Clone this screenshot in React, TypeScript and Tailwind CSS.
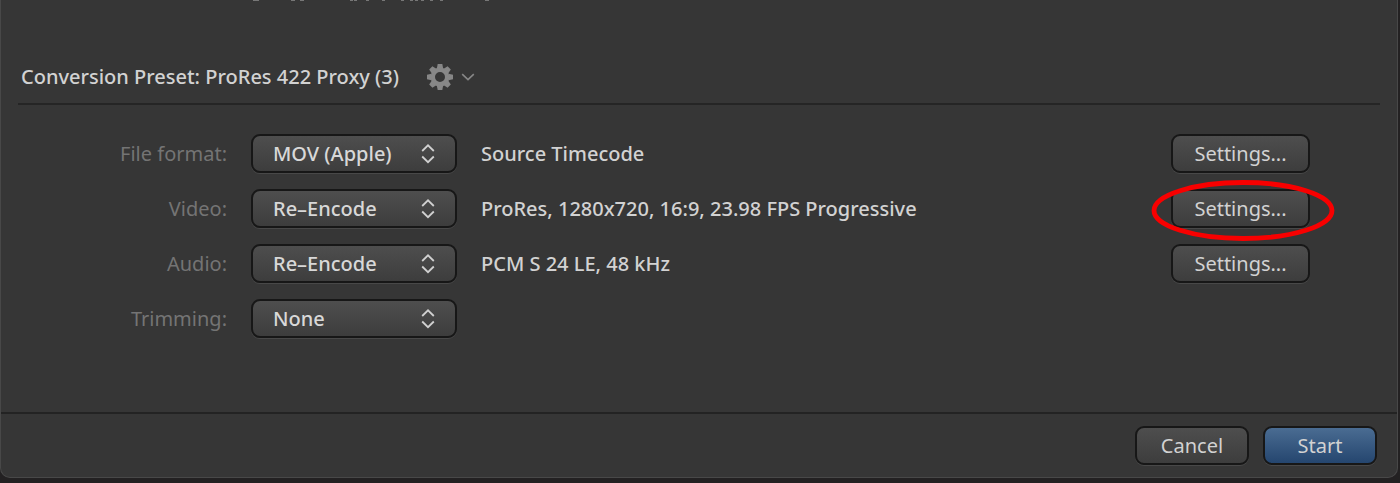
import * as React from "react";
import { clsx } from "clsx";

const rows = [
  {
    id: "file-format",
    label: "File format:",
    options: ["MOV (Apple)", "MP4", "MXF"],
    summary: "Source Timecode",
    settings: true,
  },
  {
    id: "video",
    label: "Video:",
    options: ["Re–Encode", "Copy", "None"],
    summary: "ProRes, 1280x720, 16:9, 23.98 FPS Progressive",
    settings: true,
    highlighted: true,
  },
  {
    id: "audio",
    label: "Audio:",
    options: ["Re–Encode", "Copy", "None"],
    summary: "PCM S 24 LE, 48 kHz",
    settings: true,
  },
  {
    id: "trimming",
    label: "Trimming:",
    options: ["None", "In/Out points"],
    summary: "",
    settings: false,
  },
];

// Bottom edge of the row that is scrolled out above the panel: [x, width]
const scrolledMarks = [
  [3, 6], [41, 4], [50, 4], [100, 3], [104, 3], [116, 3], [132, 3], [151, 3],
  [160, 3], [165, 3], [171, 3], [180, 3], [190, 3], [235, 4],
];

function Button({
  primary,
  className,
  children,
}: {
  primary?: boolean;
  className?: string;
  children: React.ReactNode;
}) {
  return (
    <button
      type="button"
      className={clsx(
        "h-[39px] rounded-[9px] border-2 border-[#171717] bg-linear-to-b text-xl leading-6 text-[#d2d2d2] shadow-[0_1px_0_0_#484848]",
        primary ? "from-[#4a6c92] to-[#25466f]" : "from-[#4e4e4e] to-[#3d3d3d]",
        className
      )}
    >
      {children}
    </button>
  );
}

function Select({ id, options }: { id: string; options: string[] }) {
  return (
    <div className="relative">
      <select
        id={id}
        className="block h-[39px] w-full appearance-none rounded-[9px] border-2 border-[#171717] bg-linear-to-b from-[#4e4e4e] to-[#3d3d3d] pl-5 pr-10 text-xl leading-6 font-medium text-[#d8d8d8] shadow-[0_1px_0_0_#484848]"
      >
        {options.map((option) => (
          <option key={option}>{option}</option>
        ))}
      </select>
      <svg
        viewBox="0 0 14 20"
        className="pointer-events-none absolute top-[10px] right-[22px] h-5 w-[14px]"
        fill="none"
        stroke="#d0d0d0"
        strokeWidth="1.8"
      >
        <path d="M1.2 7 7 1.3 12.8 7M1.2 12.5 7 18.2l5.8-5.7" />
      </svg>
    </div>
  );
}

function GearIcon() {
  return (
    <svg viewBox="-13 -13 26 26" className="size-[26px]">
      <circle r="7.2" fill="none" stroke="#878787" strokeWidth="4.4" />
      <g fill="#878787">
        {[0, 45, 90, 135, 180, 225, 270, 315].map((angle) => (
          <path key={angle} d="M-3.2-8.5-2.3-13H2.3L3.2-8.5Z" transform={`rotate(${angle})`} />
        ))}
      </g>
    </svg>
  );
}

export default function App() {
  return (
    <div className="flex min-h-screen flex-col bg-[#232122] pr-0.5 pb-[5px] font-['Noto_Sans',sans-serif] text-xl leading-6 text-[#d2d2d2]">
      <main className="flex flex-1 flex-col rounded-b-[10px] border border-t-0 border-[#484848] bg-[#363636]">
        <svg viewBox="0 0 260 1" className="ml-[249px] h-px w-[260px]">
          {scrolledMarks.map(([x, width]) => (
            <rect key={x} x={x} width={width} height="1" fill="#777777" />
          ))}
        </svg>

        <section className="flex-1 px-[17px]">
          <header className="mt-[49px] flex h-[55px] items-center border-b-2 border-[#252525] pl-[3px]">
            <h1 className="font-medium">Conversion Preset: ProRes 422 Proxy (3)</h1>
            <button type="button" aria-label="Preset options" className="ml-7 flex items-center gap-2">
              <GearIcon />
              <svg viewBox="0 0 14 8" className="h-2 w-[14px]" fill="none" stroke="#878787" strokeWidth="1.6">
                <path d="M1.2 1.2 7 6.6l5.8-5.4" />
              </svg>
            </button>
          </header>

          <form className="mt-[29px] mb-8 flex flex-col gap-4 pr-[70px]">
            {rows.map((row) => (
              <div key={row.id} className="grid grid-cols-[209px_206px_1fr_139px] items-center gap-6">
                <label htmlFor={row.id} className="text-right text-[#747474]">
                  {row.label}
                </label>
                <Select id={row.id} options={row.options} />
                <p className="font-medium">{row.summary}</p>
                {row.settings && (
                  <div className="relative">
                    <Button className="w-full">Settings...</Button>
                    {row.highlighted && (
                      <svg
                        viewBox="0 0 184 62"
                        className="pointer-events-none absolute -top-2.5 -left-5 h-[62px] w-[184px]"
                      >
                        <ellipse cx="92" cy="31.5" rx="89" ry="28" fill="none" stroke="#f80000" strokeWidth="4.8" />
                      </svg>
                    )}
                  </div>
                )}
              </div>
            ))}
          </form>
        </section>

        <footer className="flex justify-end gap-[14px] border-t-2 border-[#232323] px-5 py-3">
          <Button className="w-[114px]">Cancel</Button>
          <Button primary className="w-[114px]">
            Start
          </Button>
        </footer>
      </main>
    </div>
  );
}
